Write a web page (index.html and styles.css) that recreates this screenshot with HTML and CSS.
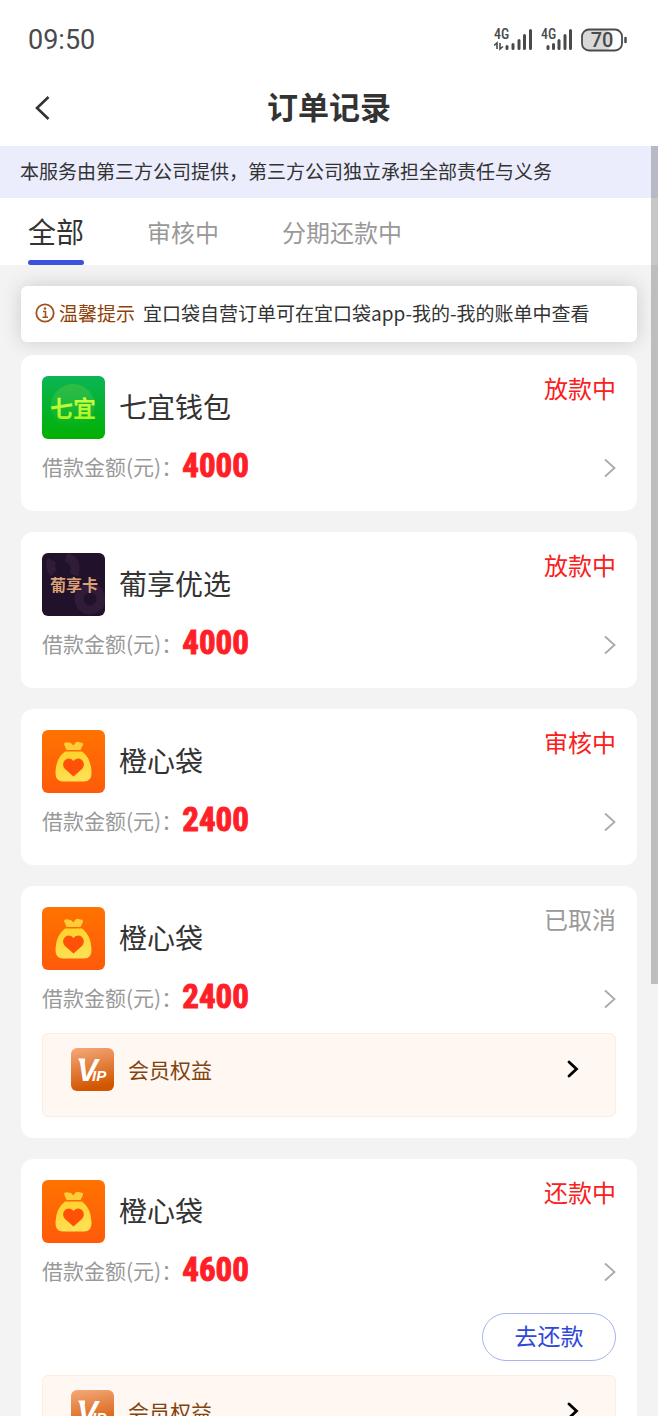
FILE: index.html
```html
<!DOCTYPE html>
<html lang="zh-CN">
<head>
<meta charset="utf-8">
<meta name="viewport" content="width=device-width, initial-scale=1">
<title>订单记录</title>
<link rel="stylesheet" href="styles.css">
</head>
<body>
<svg class="defs" aria-hidden="true">
  <defs>
    <linearGradient id="green" x1="0" y1="0" x2="0" y2="1"><stop offset="0" stop-color="#0ab555"/><stop offset="1" stop-color="#02b002"/></linearGradient>
    <linearGradient id="disc" x1="0" y1="0" x2="0" y2="1"><stop offset="0" stop-color="#2fbd45"/><stop offset="1" stop-color="#2fbd45" stop-opacity="0"/></linearGradient>
    <linearGradient id="lime" x1="0" y1="0" x2="0" y2="1"><stop offset="0" stop-color="#d4ff4a"/><stop offset="1" stop-color="#a4f41c"/></linearGradient>
    <linearGradient id="orange" x1="0" y1="0" x2="0" y2="1"><stop offset="0" stop-color="#ff7300"/><stop offset="1" stop-color="#ff5a0a"/></linearGradient>
    <linearGradient id="bag" x1="0" y1="0" x2="0.3" y2="1"><stop offset="0" stop-color="#ffd026"/><stop offset="1" stop-color="#ffe052"/></linearGradient>
    <linearGradient id="vip" x1="0" y1="0" x2="0.2" y2="1"><stop offset="0" stop-color="#f4a97c"/><stop offset="1" stop-color="#d25600"/></linearGradient>
    <symbol id="logo-bag" viewBox="0 0 63 63">
      <rect width="63" height="63" rx="6" fill="url(#orange)"/>
      <path d="M23 21.500Q14 28 13.500 42Q13 51.500 21 51.500H42Q50 51.500 49.500 42Q49 28 40 21.500Z" fill="url(#bag)"/>
      <path d="M24.500 20L22 14Q22.500 11.500 26 12.500Q29 12 31.500 15.500Q34 10 38 12.500Q41.500 12 41 15L38.500 20Z" fill="#ffcc35"/>
      <path d="M31.500 46.500L23 39C19 34.500 22 28.500 27 28.500Q30 28.500 31.500 31Q33 28.500 36 28.500C41 28.500 44 34.500 40 39Z" fill="#ff5208"/>
    </symbol>
    <symbol id="logo-vip" viewBox="0 0 43 43">
      <rect width="43" height="43" rx="6" fill="url(#vip)"/>
      <path d="M7 10.500H14V14H9Z" fill="#fff"/>
      <text x="6" y="33" class="vip-v">V</text>
      <text x="21" y="33" class="vip-ip">IP</text>
    </symbol>
    <symbol id="chevron" viewBox="0 0 12 20"><path d="M1 1.500L10.500 10L1 18.500" fill="none" stroke="#aaa" stroke-width="1.800"/></symbol>
    <symbol id="chevron-bold" viewBox="0 0 12 18"><path d="M2 2L9.500 9L2 16" fill="none" stroke="#000" stroke-width="2.800" stroke-linecap="round"/></symbol>
  </defs>
</svg>
<div class="screen">
  <div class="statusbar">
    <span>09:50</span>
    <svg width="134" height="26" viewBox="0 0 134 26" role="img" aria-label="信号与电量">
      <g class="net"><text x="0" y="12">4G</text><text x="47" y="12">4G</text></g>
      <g stroke="#4a4a4a" stroke-width="3" stroke-linecap="round">
        <path d="M13 19.500v2M19 17.500v4M25 13.500v8M30.500 8.500v13M36.500 3.500v18"/>
        <path d="M54 19.500v2M59.500 17.500v4M65 13.500v8M71 8.500v13M76.500 3.500v18"/>
      </g>
      <path d="M0 18.500L3 16V22M6 16V22L9 19.500" fill="none" stroke="#4a4a4a" stroke-width="1.600"/>
      <rect x="89" y="3" width="28" height="20" rx="6" fill="#d9d9d9"/>
      <rect x="88" y="2.500" width="40" height="21" rx="7" fill="none" stroke="#4a4a4a" stroke-width="1.800"/>
      <path d="M131.500 11v4" stroke="#4a4a4a" stroke-width="2.500" stroke-linecap="round"/>
      <text x="108" y="20" text-anchor="middle" class="battery">70</text>
    </svg>
  </div>
  <header class="topbar">
    <button class="back" aria-label="返回"><svg width="16" height="26" viewBox="0 0 16 26"><path d="M13.500 2L2 13L13.500 24" fill="none" stroke="#333" stroke-width="2.600"/></svg></button>
    <h1>订单记录</h1>
  </header>
  <main>
    <div class="scrollbar"></div>
    <p class="notice">本服务由第三方公司提供，第三方公司独立承担全部责任与义务</p>
    <nav class="tabs">
      <button class="tab active">全部</button>
      <button class="tab">审核中</button>
      <button class="tab">分期还款中</button>
    </nav>
    <div class="tip">
      <svg width="20" height="20" viewBox="0 0 20 20"><circle cx="10" cy="10" r="8.700" fill="none" stroke="#a0521c" stroke-width="1.800"/><path d="M8 8.500H10.500V14M7.500 14.200H13" fill="none" stroke="#a0521c" stroke-width="1.600"/><circle cx="10" cy="5.500" r="1.200" fill="#a0521c"/></svg>
      <strong>温馨提示</strong>
      <span>宜口袋自营订单可在宜口袋app-我的-我的账单中查看</span>
    </div>
    <section class="orders">
      <article class="card">
        <div class="head">
          <svg class="logo" viewBox="0 0 63 63"><rect width="63" height="63" rx="6" fill="url(#green)"/><circle cx="31" cy="30" r="22" fill="url(#disc)"/><text x="8" y="41" class="logo-green">七宜</text></svg>
          <h2>七宜钱包</h2><span class="status">放款中</span>
        </div>
        <div class="amount"><span>借款金额(元)：</span><b>4000</b><svg class="go" width="12" height="20"><use href="#chevron"/></svg></div>
      </article>
      <article class="card">
        <div class="head">
          <svg class="logo" viewBox="0 0 63 63"><rect width="63" height="63" rx="6" fill="#22112a"/><g fill="none" stroke="#301b38" stroke-width="9"><path d="M10 7A11 11 0 0 0 12 20M24 4Q36 8 32 22"/><circle cx="48" cy="46" r="11"/></g><text x="8" y="38" class="logo-gold">葡享卡</text></svg>
          <h2>葡享优选</h2><span class="status">放款中</span>
        </div>
        <div class="amount"><span>借款金额(元)：</span><b>4000</b><svg class="go" width="12" height="20"><use href="#chevron"/></svg></div>
      </article>
      <article class="card">
        <div class="head"><svg class="logo"><use href="#logo-bag"/></svg><h2>橙心袋</h2><span class="status">审核中</span></div>
        <div class="amount"><span>借款金额(元)：</span><b>2400</b><svg class="go" width="12" height="20"><use href="#chevron"/></svg></div>
      </article>
      <article class="card">
        <div class="head"><svg class="logo"><use href="#logo-bag"/></svg><h2>橙心袋</h2><span class="status muted">已取消</span></div>
        <div class="amount"><span>借款金额(元)：</span><b>2400</b><svg class="go" width="12" height="20"><use href="#chevron"/></svg></div>
        <button class="vip"><svg width="43" height="43"><use href="#logo-vip"/></svg><span>会员权益</span><svg class="go" width="12" height="18"><use href="#chevron-bold"/></svg></button>
      </article>
      <article class="card">
        <div class="head"><svg class="logo"><use href="#logo-bag"/></svg><h2>橙心袋</h2><span class="status">还款中</span></div>
        <div class="amount"><span>借款金额(元)：</span><b>4600</b><svg class="go" width="12" height="20"><use href="#chevron"/></svg></div>
        <button class="repay">去还款</button>
        <button class="vip"><svg width="43" height="43"><use href="#logo-vip"/></svg><span>会员权益</span><svg class="go" width="12" height="18"><use href="#chevron-bold"/></svg></button>
      </article>
    </section>
  </main>
</div>
</body>
</html>
```
FILE: styles.css
```css
* { box-sizing: border-box; }
body { margin: 0; background: #f3f3f3; color: #333; font-family: "Noto Sans CJK SC", sans-serif; }
h1, h2, p { margin: 0; }
button { margin: 0; padding: 0; border: 0; background: none; color: inherit; font: inherit; cursor: pointer; }
svg { display: block; flex: none; }
.defs { position: absolute; width: 0; height: 0; }

.screen { height: 100vh; overflow: hidden; display: flex; flex-direction: column; }
.statusbar { flex: none; display: flex; align-items: center; justify-content: space-between; height: 70px; padding: 10px 30px 0 28px; background: #fff; color: #4a4a4a; font: 27px/32px Roboto, sans-serif; }
.net { font: 500 14px "Roboto Condensed", Roboto, sans-serif; fill: #4a4a4a; }
.battery { font: 500 20px Roboto, sans-serif; fill: #4a4a4a; }

.topbar { flex: none; display: grid; grid-template-columns: 60px 1fr 60px; align-items: center; height: 76px; background: #fff; }
.back { justify-self: end; padding: 0 9px; }
.topbar h1 { padding-bottom: 4px; font-size: 31px; line-height: 40px; text-align: center; }

main { position: relative; flex: 1; min-height: 0; overflow: hidden; }
.scrollbar { position: absolute; z-index: 2; top: 0; right: 0; width: 7px; height: 66%; background: rgba(0, 0, 0, .22); }
.notice { padding: 11px 20px 13px; background: #ebedfd; font-size: 19px; line-height: 28px; white-space: nowrap; }
.tabs { display: flex; gap: 63px; height: 67px; padding: 0 28px; background: #fff; }
.tab { font-size: 24px; color: #999; white-space: nowrap; }
.tab.active { position: relative; padding: 0 0 2px; font-size: 28px; color: #333; }
.tab.active::after { content: ""; position: absolute; left: 0; right: 0; bottom: 0; height: 5px; border-radius: 3px; background: #3a52de; }

.tip { display: flex; align-items: center; height: 56px; margin: 21px 21px 13px; padding: 0 14px 2px; border-radius: 6px; background: #fff; box-shadow: 0 0 20px rgba(0, 0, 0, .16); font-size: 19px; line-height: 28px; white-space: nowrap; }
.tip strong { margin: 0 8px 0 4px; font-weight: 400; color: #8f4208; }

.orders { position: relative; display: flex; flex-direction: column; gap: 21px; padding: 0 21px 21px; }
.card { padding: 21px; border-radius: 12px; background: #fff; }
.head { display: flex; align-items: center; gap: 14px; }
.logo { width: 63px; height: 63px; }
.head h2 { flex: 1; padding-bottom: 4px; font-size: 28px; line-height: 40px; font-weight: 400; }
.status { align-self: flex-start; font-size: 24px; line-height: 24px; color: #fa2020; }
.status.muted { color: #999; }
.amount { display: flex; align-items: center; height: 51px; padding-top: 6px; font-size: 21px; line-height: 28px; color: #999; }
.amount span { padding-bottom: 4px; }
.amount b { padding-bottom: 4px; font: bold 33px/40px "Roboto Condensed", Roboto, sans-serif; color: #ff1f28; -webkit-text-stroke: 1px #ff1f28; }
.go { margin-left: auto; }
.repay { display: block; width: 134px; height: 48px; margin: 19px 0 0 auto; padding-bottom: 4px; border: 1px solid #a9b3ec; border-radius: 24px; font-size: 23px; line-height: 30px; color: #3049d8; }
.vip { display: flex; align-items: center; gap: 14px; width: 100%; height: 84px; margin-top: 12px; padding: 0 36px 12px 28px; border: 1px solid #fdece0; border-radius: 6px; background: #fff7f2; font-size: 21px; color: #7f4410; }
.repay + .vip { margin-top: 14px; }

.logo-green { font: bold 23px "Noto Sans CJK SC", sans-serif; fill: url(#lime); }
.logo-gold { font: bold 16px "Noto Sans CJK SC", sans-serif; fill: #dba278; }
.vip-v { font: italic bold 31px "Liberation Sans", sans-serif; fill: #fff; }
.vip-ip { font: italic bold 15px "Liberation Sans", sans-serif; fill: #fff; }
```
